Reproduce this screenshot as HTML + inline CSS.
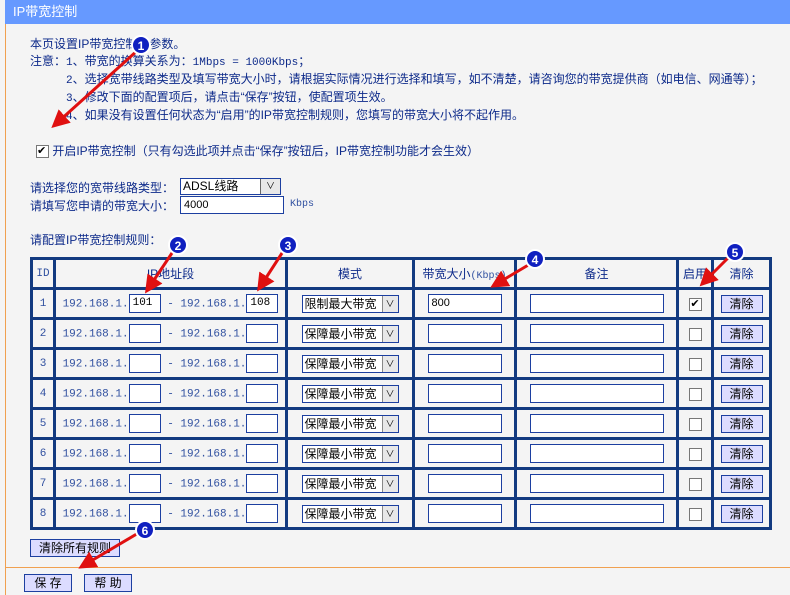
<!DOCTYPE html>
<html><head><meta charset="utf-8"><style>
*{box-sizing:border-box}
body{margin:0;width:790px;height:595px;background:#f4f4f4;font-family:"Liberation Sans","Noto Sans CJK SC",sans-serif;font-size:12px;color:#0d2a8a;position:relative;overflow:hidden}
.a{position:absolute;white-space:nowrap}
.hd{position:absolute;left:5px;top:0;width:785px;height:24px;background:#6699ff;color:#fff;font-size:13px;line-height:24px;padding-left:8px}
.lb{position:absolute;left:5px;top:24px;width:1px;height:571px;background:#f0a050}
.m{font-family:"Liberation Mono","Noto Sans CJK SC",monospace;font-size:11px}
table{position:absolute;left:30px;top:257px;border-collapse:collapse;table-layout:fixed}
td{border:3px solid #123a80;height:30px;text-align:center;padding:0;font-size:12px}
.ip{font-family:"Liberation Mono",monospace;font-size:11px;color:#3050a0}
.in{display:inline-block;width:32px;height:19px;border:1px solid #1c3fa0;background:#fff;vertical-align:middle;text-align:left;padding-left:3px;font-size:11px;line-height:17px;color:#000}
.sel{display:inline-block;width:97px;height:18px;border:1px solid #1c3fa0;background:#fff;vertical-align:middle;text-align:left;color:#000;font-size:12px;line-height:16px;padding-left:2px;position:relative}
.sel i{position:absolute;right:0;top:0;width:16px;height:16px;background:#e8e8e8;border-left:1px solid #888;font-style:normal;font-size:9px;text-align:center;line-height:16px}
.cb{display:inline-block;width:13px;height:13px;border:1px solid #777;background:#fff;vertical-align:middle;font-size:11px;line-height:11px;color:#000}
.bt{display:inline-block;width:42px;height:18px;border:1px solid #1c3fa0;background:#dcdcff;color:#000;line-height:16px;vertical-align:middle}
.b2{position:absolute;border:1px solid #1c3fa0;background:#dcdcff;color:#000;text-align:center;height:18px;line-height:16px}
</style></head><body>
<div class="hd">IP带宽控制</div>
<div class="lb"></div>
<div class="a" style="left:30px;top:35px">本页设置IP带宽控制的参数。</div>
<div class="a" style="left:30px;top:52px">注意：<span class="m">1</span>、带宽的换算关系为：<span class="m">1Mbps = 1000Kbps</span>；</div>
<div class="a" style="left:66px;top:70px"><span class="m">2</span>、选择宽带线路类型及填写带宽大小时，请根据实际情况进行选择和填写，如不清楚，请咨询您的带宽提供商（如电信、网通等）；</div>
<div class="a" style="left:66px;top:88px"><span class="m">3</span>、修改下面的配置项后，请点击“保存”按钮，使配置项生效。</div>
<div class="a" style="left:66px;top:106px"><span class="m">4</span>、如果没有设置任何状态为“启用”的IP带宽控制规则，您填写的带宽大小将不起作用。</div>
<div class="a" style="left:36px;top:142px"><span class="cb">✔</span> 开启IP带宽控制（只有勾选此项并点击“保存”按钮后，IP带宽控制功能才会生效）</div>
<div class="a" style="left:30px;top:179px">请选择您的宽带线路类型：</div>
<div class="a" style="left:30px;top:197px">请填写您申请的带宽大小：</div>
<div class="a" style="left:180px;top:178px;width:101px;height:17px;border:1px solid #1c3fa0;background:#fff;color:#000;padding-left:2px;line-height:15px">ADSL线路<span style="position:absolute;right:0;top:0;width:20px;height:15px;background:#e8e8e8;border-left:1px solid #666;text-align:center;font-size:9px">∨</span></div>
<div class="a" style="left:180px;top:196px;width:104px;height:18px;border:1px solid #1c3fa0;background:#fff;color:#000;padding-left:3px;line-height:16px;font-size:11px">4000</div>
<div class="a m" style="left:290px;top:199px;font-size:10px;color:#3050a0">Kbps</div>
<div class="a" style="left:30px;top:231px">请配置IP带宽控制规则：</div>
<table>
<colgroup><col style="width:23px"><col style="width:232px"><col style="width:127px"><col style="width:102px"><col style="width:162px"><col style="width:35px"><col style="width:58px"></colgroup>
<tr><td class="ip">ID</td><td>IP地址段</td><td>模式</td><td>带宽大小<span class="ip" style="font-size:10px">(Kbps)</span></td><td>备注</td><td>启用</td><td>清除</td></tr>
<tr><td class="ip">1</td><td class="ip">192.168.1.<span class="in">101</span> - 192.168.1.<span class="in">108</span></td><td><span class="sel">限制最大带宽<i>∨</i></span></td><td><span class="in" style="width:74px">800</span></td><td><span class="in" style="width:134px"></span></td><td><span class="cb">✔</span></td><td><span class="bt">清除</span></td></tr>
<tr><td class="ip">2</td><td class="ip">192.168.1.<span class="in"></span> - 192.168.1.<span class="in"></span></td><td><span class="sel">保障最小带宽<i>∨</i></span></td><td><span class="in" style="width:74px"></span></td><td><span class="in" style="width:134px"></span></td><td><span class="cb"></span></td><td><span class="bt">清除</span></td></tr>
<tr><td class="ip">3</td><td class="ip">192.168.1.<span class="in"></span> - 192.168.1.<span class="in"></span></td><td><span class="sel">保障最小带宽<i>∨</i></span></td><td><span class="in" style="width:74px"></span></td><td><span class="in" style="width:134px"></span></td><td><span class="cb"></span></td><td><span class="bt">清除</span></td></tr>
<tr><td class="ip">4</td><td class="ip">192.168.1.<span class="in"></span> - 192.168.1.<span class="in"></span></td><td><span class="sel">保障最小带宽<i>∨</i></span></td><td><span class="in" style="width:74px"></span></td><td><span class="in" style="width:134px"></span></td><td><span class="cb"></span></td><td><span class="bt">清除</span></td></tr>
<tr><td class="ip">5</td><td class="ip">192.168.1.<span class="in"></span> - 192.168.1.<span class="in"></span></td><td><span class="sel">保障最小带宽<i>∨</i></span></td><td><span class="in" style="width:74px"></span></td><td><span class="in" style="width:134px"></span></td><td><span class="cb"></span></td><td><span class="bt">清除</span></td></tr>
<tr><td class="ip">6</td><td class="ip">192.168.1.<span class="in"></span> - 192.168.1.<span class="in"></span></td><td><span class="sel">保障最小带宽<i>∨</i></span></td><td><span class="in" style="width:74px"></span></td><td><span class="in" style="width:134px"></span></td><td><span class="cb"></span></td><td><span class="bt">清除</span></td></tr>
<tr><td class="ip">7</td><td class="ip">192.168.1.<span class="in"></span> - 192.168.1.<span class="in"></span></td><td><span class="sel">保障最小带宽<i>∨</i></span></td><td><span class="in" style="width:74px"></span></td><td><span class="in" style="width:134px"></span></td><td><span class="cb"></span></td><td><span class="bt">清除</span></td></tr>
<tr><td class="ip">8</td><td class="ip">192.168.1.<span class="in"></span> - 192.168.1.<span class="in"></span></td><td><span class="sel">保障最小带宽<i>∨</i></span></td><td><span class="in" style="width:74px"></span></td><td><span class="in" style="width:134px"></span></td><td><span class="cb"></span></td><td><span class="bt">清除</span></td></tr>
</table>
<div class="b2" style="left:30px;top:539px;width:90px">清除所有规则</div>
<div class="a" style="left:5px;top:567px;width:785px;height:1px;background:#f0a050"></div>
<div class="b2" style="left:24px;top:574px;width:48px">保 存</div>
<div class="b2" style="left:84px;top:574px;width:48px">帮 助</div>
<svg class="a" style="left:0;top:0" width="790" height="595">
<defs><marker id="h" markerWidth="6" markerHeight="6" refX="3" refY="3" orient="auto"><path d="M0,0 L6,3 L0,6 Z" fill="#e01010"/></marker></defs>
<g stroke="#e01010" stroke-width="3" marker-end="url(#h)">
<line x1="138" y1="50" x2="58" y2="122"/>
<line x1="174" y1="250" x2="150" y2="286"/>
<line x1="284" y1="250" x2="262" y2="284"/>
<line x1="530" y1="264" x2="498" y2="283"/>
<line x1="730" y1="256" x2="706" y2="280"/>
<line x1="140" y1="532" x2="86" y2="564"/>
</g>
<g font-family="Liberation Sans" font-weight="bold" font-size="12" fill="#fff" text-anchor="middle">
<circle cx="141" cy="45" r="9" fill="#1020c0" stroke="#fff" stroke-width="2"/><text x="141" y="50">1</text>
<circle cx="178" cy="245" r="9" fill="#1020c0" stroke="#fff" stroke-width="2"/><text x="178" y="250">2</text>
<circle cx="288" cy="245" r="9" fill="#1020c0" stroke="#fff" stroke-width="2"/><text x="288" y="250">3</text>
<circle cx="535" cy="259" r="9" fill="#1020c0" stroke="#fff" stroke-width="2"/><text x="535" y="264">4</text>
<circle cx="735" cy="252" r="9" fill="#1020c0" stroke="#fff" stroke-width="2"/><text x="735" y="257">5</text>
<circle cx="145" cy="530" r="9" fill="#1020c0" stroke="#fff" stroke-width="2"/><text x="145" y="535">6</text>
</g></svg>
</body></html>
